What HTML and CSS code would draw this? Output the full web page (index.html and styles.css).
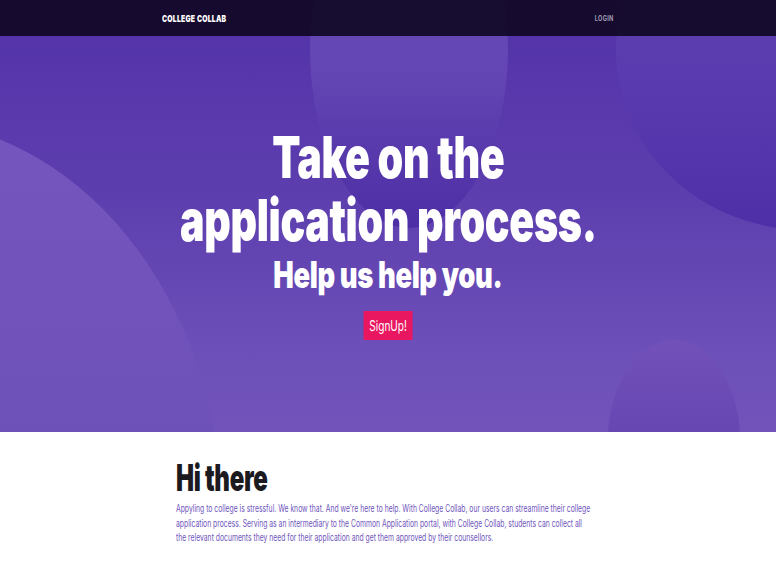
FILE: index.html
```html
<!DOCTYPE html>
<html lang="en">
<head>
<meta charset="utf-8">
<title>College Collab</title>
<link rel="stylesheet" href="styles.css">
</head>
<body>
<header class="hero">
  <div class="blob blob-top"></div>
  <div class="blob blob-right"></div>
  <div class="blob blob-left"></div>
  <div class="blob blob-bottom"></div>
  <nav class="nav">
    <div class="nav-inner">
      <a class="brand" href="#">COLLEGE COLLAB</a>
      <a class="login" href="#">LOGIN</a>
    </div>
  </nav>
  <div class="hero-content">
    <h1 class="hero-title">Take on the<br>application process.</h1>
    <h2 class="hero-sub">Help us help you.</h2>
    <a class="btn" href="#">SignUp!</a>
  </div>
</header>
<section class="intro">
  <div class="container">
    <h2 class="intro-title">Hi there</h2>
    <p class="intro-text">Appyling to college is stressful. We know that. And we're here to help. With College Collab, our users can streamline their college application process. Serving as an intermediary to the Common Application portal, with College Collab, students can collect all the relevant documents they need for their application and get them approved by their counsellors.</p>
  </div>
</section>
</body>
</html>
```

FILE: styles.css
```css
* { box-sizing: border-box; }

html, body {
  margin: 0;
  padding: 0;
  background: #ffffff;
  font-family: "Inter", "Liberation Sans", sans-serif;
  overflow-x: hidden;
}

a { text-decoration: none; }

.hero {
  position: relative;
  height: 432px;
  overflow: hidden;
  display: flex;
  flex-direction: column;
  background: linear-gradient(to bottom, #5332a9 0%, #5d3eae 45%, #6c4fb8 80%, #7153ba 100%);
}

.blob {
  position: absolute;
  border-radius: 50%;
  pointer-events: none;
}

.blob-top {
  left: 310px;
  top: -130px;
  width: 198px;
  height: 358px;
  background: linear-gradient(to bottom, #6a4cb8 0%, #6446b4 55%, #4d2ea5 100%);
}

.blob-right {
  left: 616px;
  top: -130px;
  width: 380px;
  height: 360px;
  background: linear-gradient(to bottom, #6344b4 0%, #5a3baf 60%, #4f2fa7 100%);
}

.blob-left {
  left: -420px;
  top: 120px;
  width: 642px;
  height: 800px;
  background: linear-gradient(to bottom, #7556be 0%, #6e50b9 40%, #6849b5 100%);
}

.blob-bottom {
  left: 608px;
  top: 340px;
  width: 132px;
  height: 200px;
  background: linear-gradient(to bottom, #7251b9 0%, #6646b2 50%, #5f3fae 100%);
}

.nav {
  position: relative;
  z-index: 1;
  height: 36px;
  background: rgba(17, 9, 38, 0.93);
}

.nav-inner {
  width: 452px;
  height: 36px;
  margin: 0 auto;
  display: flex;
  align-items: center;
  justify-content: space-between;
}

.brand {
  display: inline-block;
  color: #ffffff;
  font-size: 9px;
  font-weight: 900;
  letter-spacing: 0.3px;
  transform: scaleX(0.76);
  transform-origin: left center;
}

.login {
  display: inline-block;
  color: #9f9bb2;
  font-size: 7px;
  font-weight: 700;
  letter-spacing: 0.4px;
  transform: scaleX(0.8);
  transform-origin: right center;
}

.hero-content {
  position: relative;
  z-index: 1;
  flex: 1;
  display: flex;
  flex-direction: column;
  align-items: center;
  padding-top: 90px;
  color: #ffffff;
  text-align: center;
}

.hero-title {
  margin: 0;
  font-size: 58px;
  line-height: 63px;
  font-weight: 900;
  letter-spacing: -0.5px;
  white-space: nowrap;
  transform: scaleX(0.71);
}

.hero-sub {
  margin: 3px 0 0;
  font-size: 37px;
  line-height: 40px;
  font-weight: 900;
  letter-spacing: -0.5px;
  white-space: nowrap;
  transform: scaleX(0.74);
}

.btn {
  display: inline-block;
  margin-top: 16px;
  padding: 5px 8px;
  background: #e8175f;
  color: #ffffff;
  font-size: 14px;
  line-height: 19px;
  font-weight: 400;
  transform: scaleX(0.72);
}

.intro {
  padding: 24px 0 30px;
}

.container {
  width: 424px;
  margin: 0 auto;
}

.intro-title {
  margin: 0;
  font-size: 37px;
  line-height: 44px;
  font-weight: 900;
  color: #1b1a1f;
  letter-spacing: -0.5px;
  white-space: nowrap;
  transform: scaleX(0.65);
  transform-origin: left center;
}

.intro-text {
  margin: 1px 0 0;
  width: 611px;
  font-size: 10px;
  line-height: 14.5px;
  font-weight: 400;
  color: #6f55bc;
  transform: scaleX(0.68);
  transform-origin: left top;
}
```
